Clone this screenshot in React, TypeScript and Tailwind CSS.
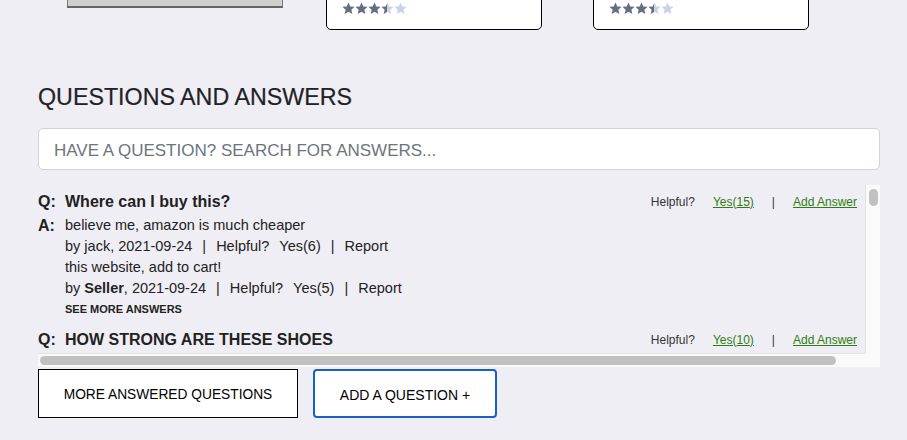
import React from 'react';

const Stars = ({ id }: { id: string }) => {
  const star = 'M6.5 0.4l1.8 4 4.3.4-3.25 2.85 1 4.25-3.85-2.25-3.85 2.25 1-4.25-3.25-2.85 4.3-.4z';
  return (
    <div className="flex">
      {[0, 1, 2, 3, 4].map((i) => (
        <svg key={i} width="13" height="13" viewBox="0 0 13 13">
          <defs>
            <linearGradient id={`${id}-${i}`} x1="0" x2="1" y1="0" y2="0">
              <stop offset={i < 3 ? '1' : i === 3 ? '0.45' : '0'} stopColor="#647080" />
              <stop offset={i < 3 ? '1' : i === 3 ? '0.45' : '0'} stopColor="#cbd3e2" />
            </linearGradient>
          </defs>
          <path d={star} fill={`url(#${id}-${i})`} />
        </svg>
      ))}
    </div>
  );
};

const Sep = () => <span className="mx-[10px]">|</span>;

const Helpful = ({ count }: { count: number }) => (
  <div className="flex items-center text-[12px] text-[#333] pr-[8px] shrink-0">
    <span>Helpful?</span>
    <a className="ml-[18px] text-[#2e7d12] underline">Yes({count})</a>
    <span className="mx-[18px]">|</span>
    <a className="text-[#2e7d12] underline">Add Answer</a>
  </div>
);

export default function App() {
  return (
    <div className="min-h-screen bg-[#f0eef5] text-[#222] font-['Liberation_Sans',Arial,sans-serif]">
      {/* carousel remnants */}
      <div className="h-[30px] overflow-hidden flex items-end pl-[67px]">
        <div className="w-[216px] h-[60px] mb-[22px] bg-[#d0d0d0] border border-[#777] border-b-2 border-b-[#666]" />
        <div className="ml-[43px] w-[216px] h-[80px] bg-white border border-black rounded-[5px] flex flex-col justify-end px-[15px] pb-[14px]">
          <Stars id="c1" />
        </div>
        <div className="ml-[51px] w-[216px] h-[80px] bg-white border border-black rounded-[5px] flex flex-col justify-end px-[15px] pb-[14px]">
          <Stars id="c2" />
        </div>
      </div>

      <div className="pl-[38px] pr-[27px]">
        <h2 className="mt-[53px] text-[23.25px] leading-[28px] text-[#1f2226] [-webkit-text-stroke:0.2px_#1f2226]">QUESTIONS AND ANSWERS</h2>

        <input
          className="mt-[17px] w-full h-[42px] bg-white border border-[#ced4da] rounded-[5px] px-[15px] pt-[3px] text-[17px] outline-none placeholder:text-[#6c757d]"
          placeholder="HAVE A QUESTION? SEARCH FOR ANSWERS..."
        />

        {/* question list with scrollbars */}
        <div className="mt-[15px] h-[182px] flex flex-col bg-[#fafafa]">
          <div className="flex flex-1 min-h-0">
            <div className="flex-1 overflow-hidden bg-[#f0eef5] border-r border-b border-[#e2e2e2] pt-[5px]">
              <div className="flex items-center justify-between h-[24px]">
                <div className="flex items-center text-[16px] font-bold">
                  <span className="w-[27px]">Q:</span>
                  <span>Where can I buy this?</span>
                </div>
                <Helpful count={15} />
              </div>
              <div className="flex mt-[1px] text-[14.5px] leading-[21px]">
                <span className="w-[27px] text-[16px] font-bold">A:</span>
                <div>
                  <div>believe me, amazon is much cheaper</div>
                  <div>
                    by jack, 2021-09-24<Sep />Helpful?<span className="ml-[10px]">Yes(6)</span><Sep />Report
                  </div>
                  <div>this website, add to cart!</div>
                  <div>
                    by <b>Seller</b>, 2021-09-24<Sep />Helpful?<span className="ml-[10px]">Yes(5)</span><Sep />Report
                  </div>
                  <div className="text-[11px] font-bold">SEE MORE ANSWERS</div>
                </div>
              </div>
              <div className="flex items-center justify-between h-[24px] mt-[8px]">
                <div className="flex items-center text-[16px] font-bold">
                  <span className="w-[27px]">Q:</span>
                  <span>HOW STRONG ARE THESE SHOES</span>
                </div>
                <Helpful count={10} />
              </div>
            </div>
            <div className="w-[14px] pt-[4px] flex justify-center">
              <div className="w-[9px] h-[17px] rounded-full bg-[#c1c1c1]" />
            </div>
          </div>
          <div className="h-[13px] flex items-center pl-[2px]">
            <div className="w-[796px] h-[9px] rounded-full bg-[#c1c1c1]" />
          </div>
        </div>

        <div className="mt-[2px] flex gap-[15px]">
          <button className="w-[260px] h-[49px] pt-[3px] bg-white border border-black text-[13.75px] text-black">
            MORE ANSWERED QUESTIONS
          </button>
          <button className="w-[184px] h-[49px] pt-[3px] bg-white border-2 border-[#1760cc] rounded-[4px] text-[14px] text-black">
            ADD A QUESTION +
          </button>
        </div>
      </div>
    </div>
  );
}
